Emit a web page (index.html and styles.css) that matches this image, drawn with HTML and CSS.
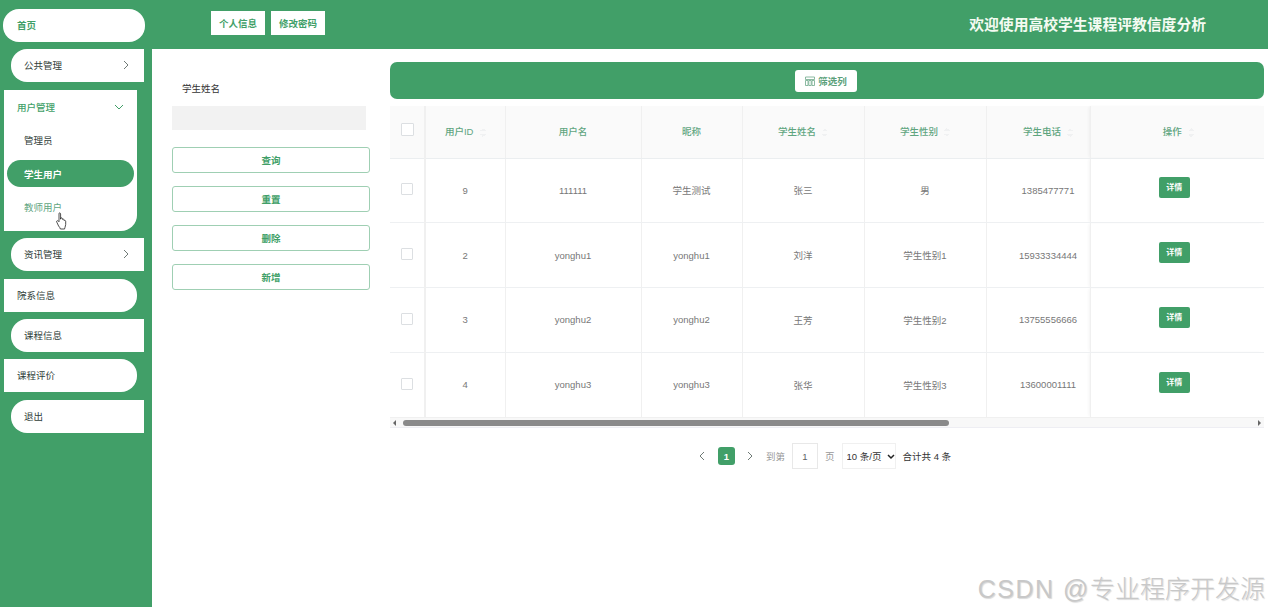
FILE: index.html
```html
<!DOCTYPE html>
<html lang="zh">
<head>
    <meta charset="UTF-8">
    <title>高校学生课程评教信度分析</title>
    <link rel="stylesheet" href="styles.css">
</head>
<body>
    <div class="app">
        <!-- 侧边菜单 -->
        <aside class="sidebar">
            <a class="menu-item home">首页</a>
            <a class="menu-item even">公共管理
                <svg class="chev" viewBox="0 0 8 10"><path d="M2 1l4 4-4 4"/></svg>
            </a>
            <div class="menu-group">
                <div class="group-title">用户管理
                    <svg class="chev-down" viewBox="0 0 10 8"><path d="M1 2l4 4 4-4"/></svg>
                </div>
                <a class="sub-item">管理员</a>
                <a class="sub-item active">学生用户</a>
                <a class="sub-item hover">教师用户</a>
            </div>
            <a class="menu-item even">资讯管理
                <svg class="chev" viewBox="0 0 8 10"><path d="M2 1l4 4-4 4"/></svg>
            </a>
            <a class="menu-item odd">院系信息</a>
            <a class="menu-item even">课程信息</a>
            <a class="menu-item odd">课程评价</a>
            <a class="menu-item even">退出</a>
            <svg class="hand" viewBox="0 0 12 18">
                <path d="M3 1.2c.7-.6 1.600-.2 1.600.8v5.200l.3-1.200c.7-.4 1.400-.2 1.500.6l.1.800c.6-.5 1.400-.3 1.500.4l.1.800c.6-.5 1.500-.2 1.600.7.200 2 0 4.400-.7 6.100-.2.5-.4 1-.4 1.600H4.400c-.3-1.200-1-2-1.800-3L.8 10.200c-.5-.8 0-1.700.9-1.500.5.100 1 .6 1.300 1V2c0-.3 0-.6 0-.8z"/>
            </svg>
        </aside>

        <div class="content">
            <!-- 顶部 -->
            <header class="topbar">
                <div class="top-buttons">
                    <a class="top-btn">个人信息</a>
                    <a class="top-btn">修改密码</a>
                </div>
                <div class="site-title">欢迎使用高校学生课程评教信度分析</div>
            </header>

            <main class="main">
                <section class="filter">
                    <label class="filter-label">学生姓名</label>
                    <div class="filter-input"></div>
                    <button class="filter-btn">查询</button>
                    <button class="filter-btn">重置</button>
                    <button class="filter-btn">删除</button>
                    <button class="filter-btn">新增</button>
                </section>

                <section class="list">
                    <div class="toolbar">
                        <button class="column-btn">
                            <svg viewBox="0 0 10 10"><path d="M.5 1h9v2.500h-9zM.5 4.500h2.500v5h-2.500zM3.800 4.500h2.400v5h-2.400zM7 4.500h2.500v5H7z"/></svg>
                            筛选列
                        </button>
                    </div>

                    <div class="table-box">
                        <table class="data-table">
                            <colgroup>
                                <col class="c-check">
                                <col class="c-id">
                                <col class="c-user">
                                <col class="c-nick">
                                <col class="c-name">
                                <col class="c-sex">
                                <col class="c-phone">
                                <col class="c-op">
                            </colgroup>
                            <thead>
                                <tr>
                                    <th class="fix-left"><span class="check big"></span></th>
                                    <th>用户ID<i class="sort"></i></th>
                                    <th>用户名</th>
                                    <th>昵称</th>
                                    <th>学生姓名<i class="sort"></i></th>
                                    <th>学生性别<i class="sort"></i></th>
                                    <th class="phone">学生电话<i class="sort"></i></th>
                                    <th class="fix-right">操作<i class="sort"></i></th>
                                </tr>
                            </thead>
                            <tbody>
                                <tr>
                                    <td class="fix-left"><span class="check"></span></td>
                                    <td>9</td><td>111111</td><td>学生测试</td><td>张三</td><td>男</td><td class="phone">1385477771</td>
                                    <td class="fix-right"><a class="detail-btn">详情</a></td>
                                </tr>
                                <tr>
                                    <td class="fix-left"><span class="check"></span></td>
                                    <td>2</td><td>yonghu1</td><td>yonghu1</td><td>刘洋</td><td>学生性别1</td><td class="phone">15933334444</td>
                                    <td class="fix-right"><a class="detail-btn">详情</a></td>
                                </tr>
                                <tr>
                                    <td class="fix-left"><span class="check"></span></td>
                                    <td>3</td><td>yonghu2</td><td>yonghu2</td><td>王芳</td><td>学生性别2</td><td class="phone">13755556666</td>
                                    <td class="fix-right"><a class="detail-btn">详情</a></td>
                                </tr>
                                <tr>
                                    <td class="fix-left"><span class="check"></span></td>
                                    <td>4</td><td>yonghu3</td><td>yonghu3</td><td>张华</td><td>学生性别3</td><td class="phone">13600001111</td>
                                    <td class="fix-right"><a class="detail-btn">详情</a></td>
                                </tr>
                            </tbody>
                        </table>
                        <div class="scrollbar">
                            <i class="arrow-left"></i>
                            <div class="thumb-track"><div class="thumb"></div></div>
                            <i class="arrow-right"></i>
                        </div>
                    </div>

                    <div class="pager">
                        <svg class="pager-arrow" viewBox="0 0 8 10"><path d="M6 1L2 5l4 4"/></svg>
                        <span class="page-num">1</span>
                        <svg class="pager-arrow" viewBox="0 0 8 10"><path d="M2 1l4 4-4 4"/></svg>
                        <span class="pager-text first">到第</span>
                        <span class="page-input">1</span>
                        <span class="pager-text">页</span>
                        <select class="page-size"><option>10 条/页</option></select>
                        <span class="pager-total">合计共 4 条</span>
                    </div>
                </section>
            </main>
        </div>
    </div>
    <div class="watermark"><span class="wm-latin">CSDN @</span>专业程序开发源</div>
</body>
</html>
```

FILE: styles.css
```css
* {
    margin: 0;
    padding: 0;
    box-sizing: border-box;
    font-family: 'Liberation Sans', 'Noto Sans CJK SC', sans-serif;
}

html, body {
    height: 100%;
    overflow: hidden;
    background-color: #fff;
}

.app {
    display: flex;
    height: 607px;
}

/* 侧边菜单 */
.sidebar {
    position: relative;
    width: 152px;
    flex-shrink: 0;
    background-color: #419f68;
    padding-top: 9px;
    display: flex;
    flex-direction: column;
    gap: 7.400px;
    font-size: 9.500px;
    color: #2f3d38;
}

.menu-item {
    height: 33px;
    padding-bottom: 1px;
    display: flex;
    align-items: center;
    justify-content: space-between;
    background-color: #fff;
}

.menu-item.home {
    width: 142px;
    margin-left: 3px;
    padding-left: 14px;
    border-radius: 16px;
    color: #419f68;
    font-weight: bold;
}

.menu-item.even {
    width: 133px;
    margin-left: 11px;
    padding-left: 13px;
    padding-right: 14px;
    border-radius: 16px 0 0 16px;
}

.menu-item.odd {
    width: 133px;
    margin-left: 4px;
    padding-left: 13px;
    border-radius: 0 16px 16px 0;
}

.chev, .chev-down, .pager-arrow {
    fill: none;
    stroke: #6f7a76;
    stroke-width: 1;
}

.chev {
    width: 8px;
    height: 10px;
}

.chev-down {
    width: 10px;
    height: 8px;
    stroke: #419f68;
}

.menu-group {
    width: 133px;
    height: 141px;
    margin-left: 4px;
    background-color: #fff;
    border-radius: 0 0 16px 0;
    display: flex;
    flex-direction: column;
    align-items: stretch;
}

.group-title {
    height: 34px;
    padding: 0 13px 0 13px;
    display: flex;
    align-items: center;
    justify-content: space-between;
    color: #419f68;
    font-weight: 500;
}

.sub-item {
    height: 27px;
    margin: 3px 3px 3.500px;
    padding-left: 17px;
    display: flex;
    align-items: center;
    border-radius: 14px;
}

.sub-item.active {
    background-color: #419f68;
    color: #fff;
    font-weight: bold;
}

.sub-item.hover {
    color: #5fa57f;
}

.hand {
    position: absolute;
    left: 56px;
    top: 212px;
    width: 12px;
    height: 18px;
    fill: #fff;
    stroke: #222;
    stroke-width: 0.8;
}

.content {
    flex: 1;
    min-width: 0;
    display: flex;
    flex-direction: column;
}

/* 顶部 */
.topbar {
    height: 49px;
    background-color: #419f68;
    padding: 0 62px 3px 59px;
    display: flex;
    align-items: center;
    justify-content: space-between;
}

.top-buttons {
    display: flex;
    gap: 6px;
}

.top-btn {
    width: 54px;
    height: 24px;
    background-color: #fff;
    color: #419f68;
    font-size: 9.500px;
    font-weight: bold;
    display: flex;
    align-items: center;
    justify-content: center;
}

.site-title {
    color: #f4fbf2;
    font-size: 14.800px;
    font-weight: bold;
}

.main {
    flex: 1;
    display: flex;
    padding: 13px 4px 0 20px;
    gap: 20px;
}

/* 搜索 */
.filter {
    width: 198px;
    flex-shrink: 0;
    display: flex;
    flex-direction: column;
}

.filter-label {
    font-size: 9.500px;
    color: #333;
    padding: 20px 0 0 10px;
    line-height: 13px;
}

.filter-input {
    width: 194px;
    height: 24px;
    margin-top: 11px;
    margin-bottom: 17px;
    background-color: #f2f2f2;
}

.filter-btn {
    height: 26px;
    margin-bottom: 13px;
    background-color: #fff;
    border: 1px solid #9fcfb3;
    border-radius: 3px;
    color: #419f68;
    font-size: 9.500px;
    font-weight: bold;
}

/* 列表 */
.list {
    flex: 1;
    min-width: 0;
}

.toolbar {
    height: 37px;
    background-color: #419f68;
    border-radius: 7px;
    display: flex;
    align-items: center;
    justify-content: center;
}

.column-btn {
    width: 62px;
    height: 22px;
    margin-right: 2px;
    background-color: #fff;
    border: none;
    border-radius: 3px;
    color: #5b9f7a;
    font-size: 9.500px;
    font-weight: bold;
    display: flex;
    align-items: center;
    justify-content: center;
    gap: 3px;
}

.column-btn svg {
    width: 10px;
    height: 10px;
    fill: none;
    stroke: #6fa88a;
    stroke-width: 0.8;
}

.table-box {
    margin-top: 7px;
    border-bottom: 1px solid #eeeef3;
}

.data-table {
    width: 874px;
    table-layout: fixed;
    border-collapse: collapse;
    font-size: 9.500px;
    color: #777;
    text-align: center;
}

.c-check { width: 35px; }
.c-id { width: 80px; }
.c-user { width: 136px; }
.c-nick { width: 101px; }
.c-name { width: 122px; }
.c-sex { width: 122px; }
.c-phone { width: 104px; }
.c-op { width: 174px; }

.data-table th {
    height: 52px;
    padding-bottom: 2px;
    background-color: #fafafa;
    color: #5fa57f;
    font-weight: 500;
    border-right: 1px solid #f0f0f0;
    border-bottom: 1px solid #ebeef0;
}

.data-table td {
    height: 64.750px;
    border-right: 1px solid #f0f0f0;
    border-bottom: 1px solid #eef0f2;
}

.data-table tbody tr:last-child td {
    border-bottom: none;
}

.data-table th:last-child, .data-table td:last-child {
    border-right: none;
}

/* 被固定列遮住一部分，文字偏右 */
.data-table .phone {
    padding-left: 20px;
}

.data-table th.fix-right {
    padding-left: 2px;
}

.fix-left {
    border-right: 2px solid #f0f0f0 !important;
}

.fix-right {
    box-shadow: -2px 0 3px -1px rgba(0, 0, 0, 0.05);
}

.check {
    display: inline-block;
    width: 12px;
    height: 12px;
    margin: 0 0 2px 0;
    vertical-align: middle;
    background-color: #fff;
    border: 1px solid #dcdfe2;
    border-radius: 1px;
}

.check.big {
    width: 13px;
    height: 13px;
}

.sort {
    display: inline-block;
    width: 6px;
    height: 9px;
    margin-left: 6px;
    vertical-align: middle;
    background:
        linear-gradient(135deg, transparent 50%, #f0f1f2 50%) 0 0 / 3px 3px no-repeat,
        linear-gradient(225deg, transparent 50%, #f0f1f2 50%) 3px 0 / 3px 3px no-repeat,
        linear-gradient(45deg, transparent 50%, #f0f1f2 50%) 0 6px / 3px 3px no-repeat,
        linear-gradient(315deg, transparent 50%, #f0f1f2 50%) 3px 6px / 3px 3px no-repeat;
}

.detail-btn {
    display: inline-block;
    width: 31px;
    height: 21px;
    margin: 0 6px 5px 0;
    line-height: 21px;
    background-color: #419f68;
    border-radius: 2px;
    color: #fff;
    font-size: 8px;
    font-weight: bold;
}

.scrollbar {
    height: 10px;
    display: flex;
    align-items: center;
    background-color: #f8f8f8;
    border-top: 1px solid #f0f0f0;
}

.thumb-track {
    flex: 1;
    padding: 0 5px;
}

.thumb {
    width: 546px;
    height: 6px;
    background-color: #8a8a8a;
    border-radius: 3px;
    margin-left: 2px;
}

.arrow-left, .arrow-right {
    width: 0;
    height: 0;
    border-top: 3px solid transparent;
    border-bottom: 3px solid transparent;
}

.arrow-left {
    margin-left: 3px;
    border-right: 3px solid #666;
}

.arrow-right {
    margin-right: 3px;
    border-left: 3px solid #666;
}

/* 分页 */
.pager {
    margin-top: 15px;
    height: 26px;
    padding-left: 308px;
    display: flex;
    align-items: center;
    font-size: 9.500px;
    color: #999;
}

.pager-arrow {
    width: 8px;
    height: 10px;
}

.page-num {
    width: 17px;
    height: 18px;
    margin: 0 11px 0 12px;
    background-color: #419f68;
    border-radius: 3px;
    color: #fff;
    font-weight: bold;
    display: flex;
    align-items: center;
    justify-content: center;
}

.pager-text {
    margin: 0 7px;
}

.pager-text.first {
    margin-left: 12px;
}

.page-input {
    width: 26px;
    height: 26px;
    border: 1px solid #e8e8e8;
    color: #606266;
    display: flex;
    align-items: center;
    justify-content: center;
}

.page-size {
    width: 54px;
    height: 26px;
    padding-left: 4px;
    border: 1px solid #f0f0f0;
    color: #333;
    font-size: 9.500px;
    appearance: none;
    background: #fff url("data:image/svg+xml,%3Csvg xmlns='http://www.w3.org/2000/svg' width='8' height='6'%3E%3Cpath d='M1 1l3 3 3-3' fill='none' stroke='%23222' stroke-width='1.500'/%3E%3C/svg%3E") no-repeat 44px 10px;
}

.pager-total {
    margin-left: 7px;
    color: #333;
}

.watermark {
    position: absolute;
    right: 3px;
    top: 569px;
    font-size: 25px;
    font-weight: 300;
    color: #c8c8c8;
    text-shadow: 1px 1px 1px rgba(0, 0, 0, 0.15);
}

.wm-latin {
    letter-spacing: 1.500px;
}
```
